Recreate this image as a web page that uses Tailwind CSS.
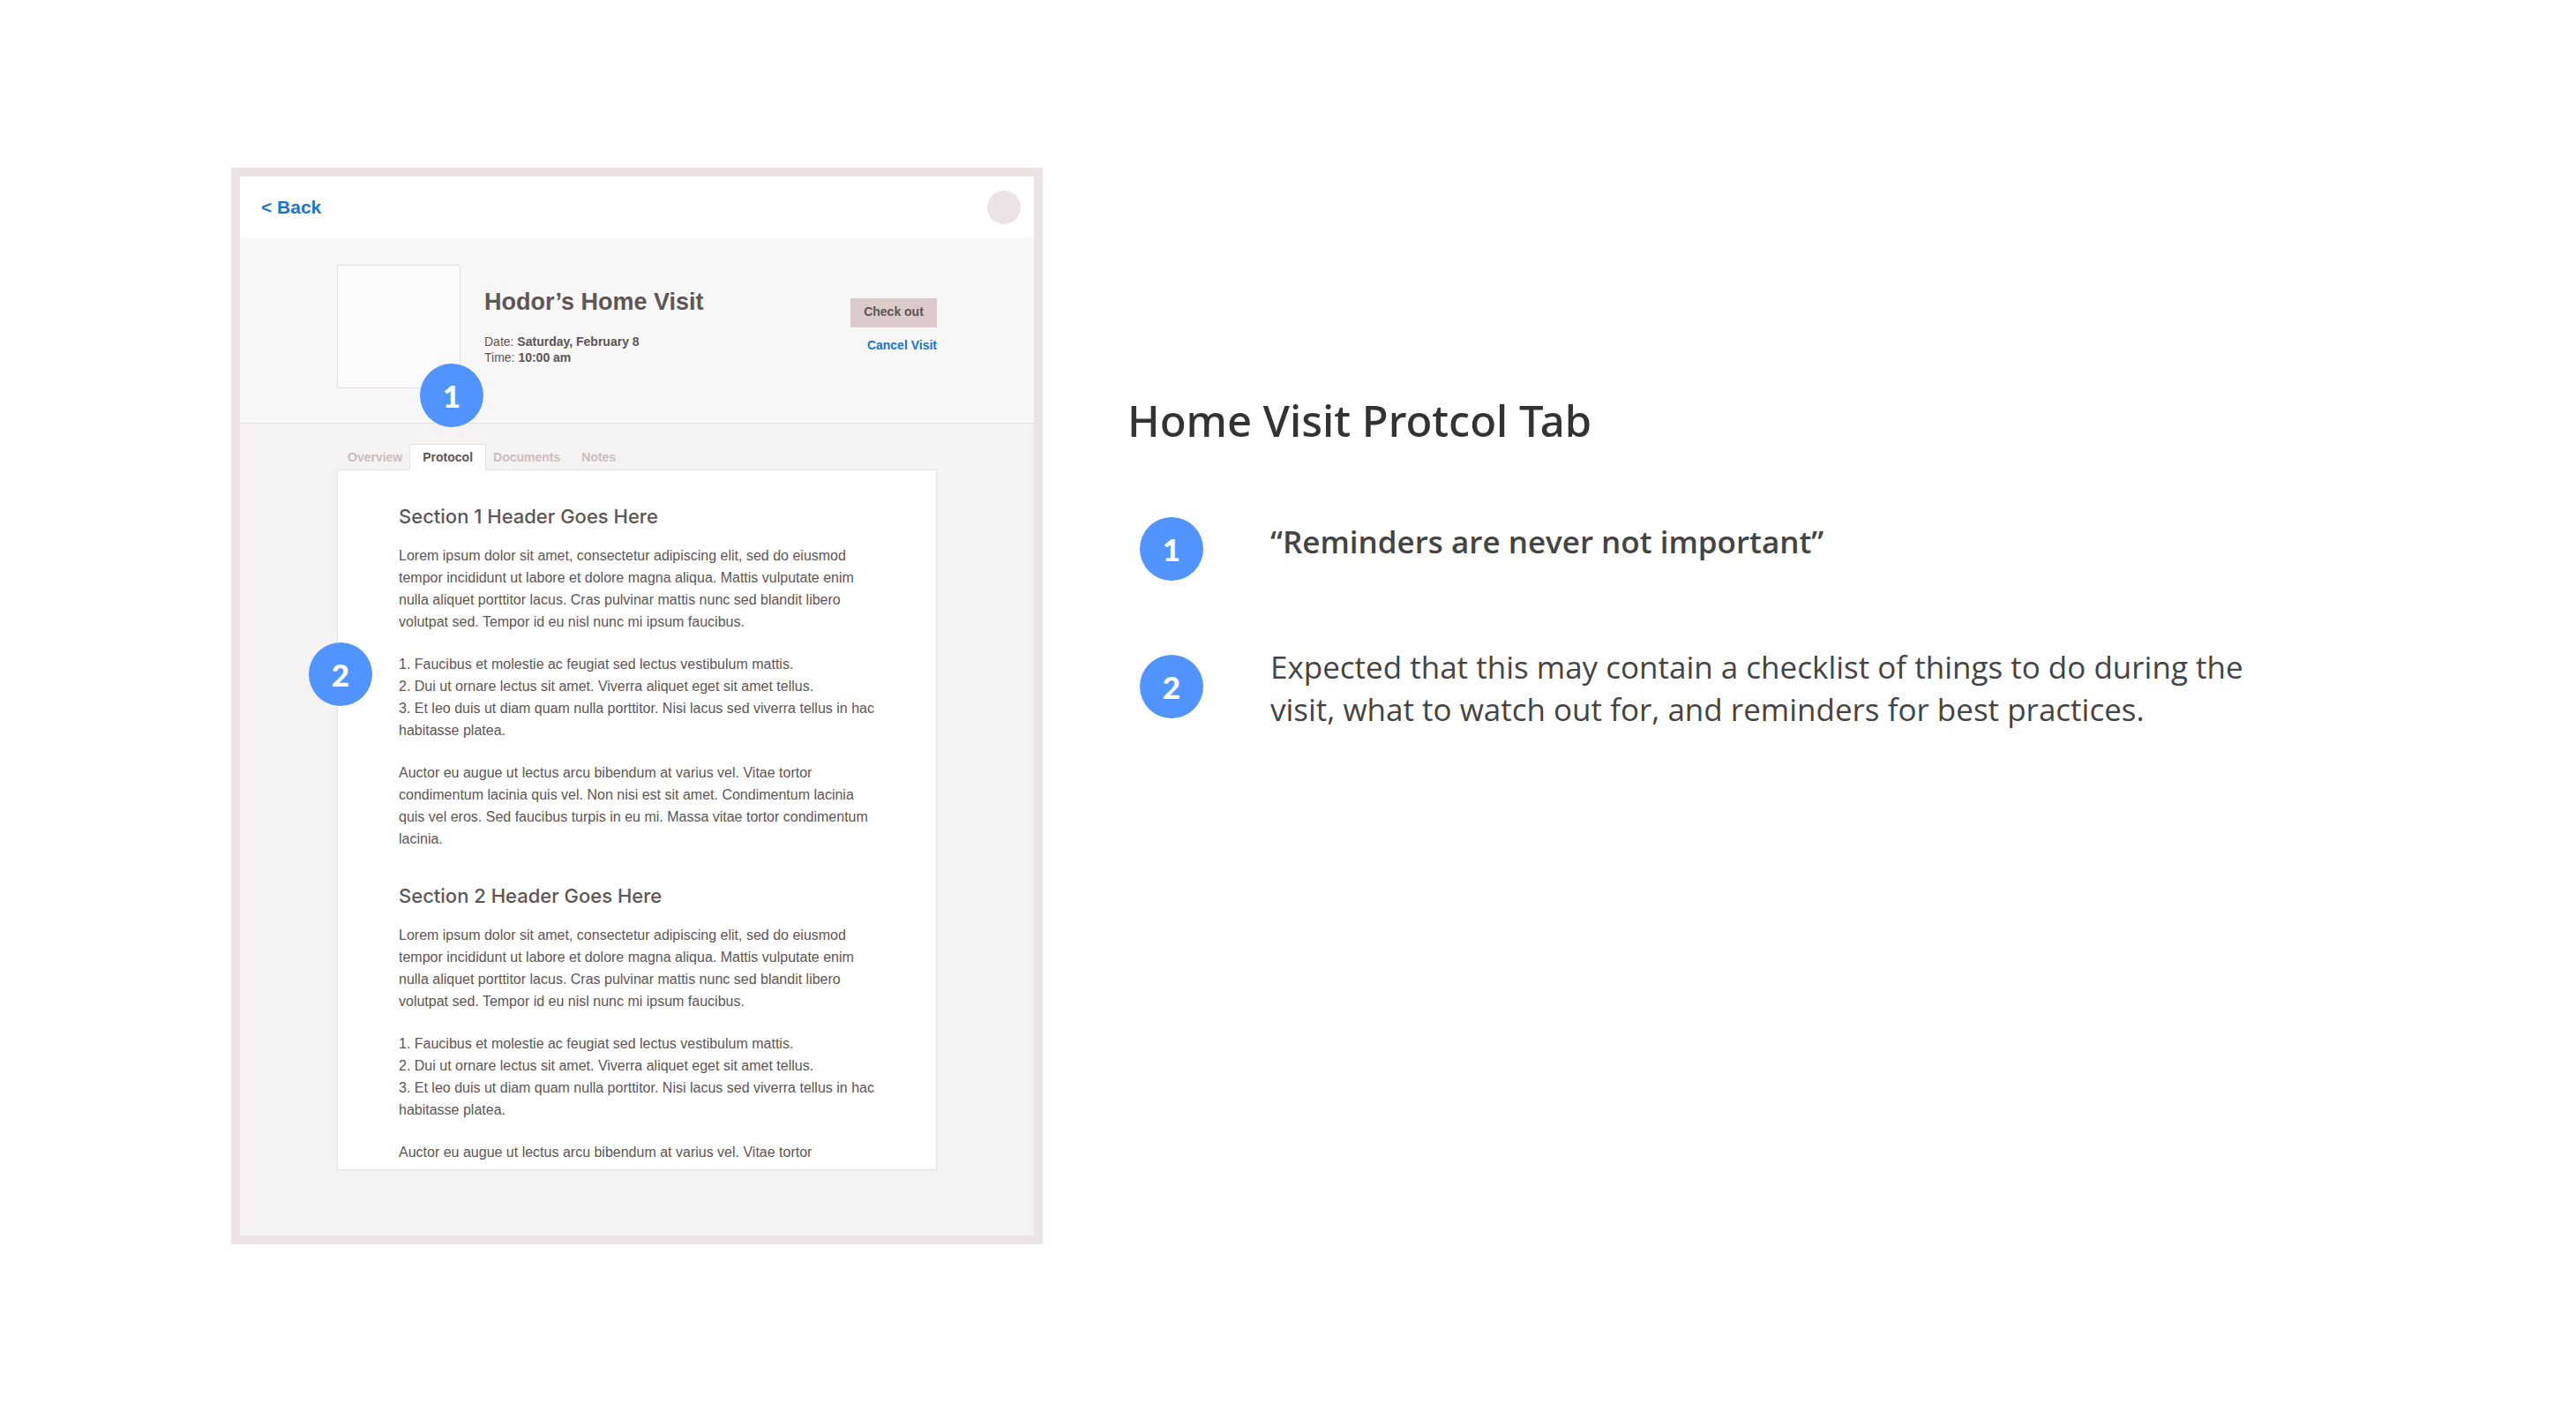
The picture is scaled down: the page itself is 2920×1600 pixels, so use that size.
<!DOCTYPE html>
<html lang="en">
<head>
<meta charset="utf-8">
<meta name="viewport" content="width=device-width, initial-scale=1">
<title>Home Visit Protocol Tab</title>
<script src="https://cdn.jsdelivr.net/npm/@tailwindcss/browser@4"></script>
</head>
<body class="min-h-screen bg-white">
<main class="flex items-start gap-24 pt-[190px] pr-16 pb-16 pl-[262px]">

  <!-- Tablet wireframe -->
  <div class="shrink-0 basis-[920px] border-10 border-[#ebe3e4] bg-[#f4f3f1] font-['Liberation_Sans',Arial,sans-serif] text-[#5e5555]">
    <header class="flex h-[70px] items-center justify-between bg-white pr-[15px] pb-px pl-6">
      <a href="#" class="text-[21px] leading-6 font-bold text-[#1b75d0]">&lt; Back</a>
      <button type="button" aria-label="Account" class="size-[38px] rounded-full bg-[#ebe3e4]"></button>
    </header>

    <section class="flex h-[210px] items-start border-b border-[#dfe0e1] bg-[#f7f7f7] px-[110px] pt-[30px]">
      <div class="relative size-[140px] shrink-0 border border-[#e2e2e3] bg-[#fcfafb]">
        <span class="absolute top-[111px] left-[93px] flex size-[72px] items-center justify-center rounded-full bg-[#5194ff] font-['Lato',sans-serif] text-[35px] leading-none font-black text-white">1</span>
      </div>
      <div class="ml-[27px] flex-1 pt-[26px]">
        <h1 class="text-[27px] leading-8 font-bold">Hodor’s Home Visit</h1>
        <p class="mt-5 text-sm leading-[18px]">Date: <strong>Saturday, February 8</strong><br>Time: <strong>10:00 am</strong></p>
      </div>
      <div class="flex flex-col items-end pt-[38px]">
        <button type="button" class="h-[33px] w-[98px] bg-[#dbcbcb] pb-1 text-sm font-bold">Check out</button>
        <a href="#" class="mt-[11px] text-sm leading-[18px] font-bold text-[#1b75d0]">Cancel Visit</a>
      </div>
    </section>

    <section class="px-[110px] pt-[23px] pb-[74px]">
      <nav class="relative z-10 -mb-px flex h-[30px] items-stretch gap-2 pl-3 text-sm leading-[29px] font-bold text-[#cdbdbd]">
        <a href="#" class="border-t border-transparent">Overview</a>
        <a href="#" aria-current="page" class="border border-b-0 border-[#e2e3e4] bg-white px-[14px] text-[#5e5555]">Protocol</a>
        <a href="#" class="mr-4 border-t border-transparent">Documents</a>
        <a href="#" class="border-t border-transparent">Notes</a>
      </nav>

      <div class="relative border border-[#e2e3e4] bg-white">
        <div class="h-[792px] overflow-hidden pt-9 pr-[68px] pl-[69px] text-base leading-[25px]">
          <article>
            <h2 class="font-['Inter',sans-serif] text-[22px] leading-8 font-medium">Section 1 Header Goes Here</h2>
            <p class="mt-4">Lorem ipsum dolor sit amet, consectetur adipiscing elit, sed do eiusmod tempor incididunt ut labore et dolore magna aliqua. Mattis vulputate enim nulla aliquet porttitor lacus. Cras pulvinar mattis nunc sed blandit libero volutpat sed. Tempor id eu nisl nunc mi ipsum faucibus.</p>
            <ol class="mt-[23px] list-none">
              <li>1. Faucibus et molestie ac feugiat sed lectus vestibulum mattis.</li>
              <li>2. Dui ut ornare lectus sit amet. Viverra aliquet eget sit amet tellus.</li>
              <li>3. Et leo duis ut diam quam nulla porttitor. Nisi lacus sed viverra tellus in hac habitasse platea.</li>
            </ol>
            <p class="mt-[23px]">Auctor eu augue ut lectus arcu bibendum at varius vel. Vitae tortor condimentum lacinia quis vel. Non nisi est sit amet. Condimentum lacinia quis vel eros. Sed faucibus turpis in eu mi. Massa vitae tortor condimentum lacinia.</p>
          </article>
          <article class="mt-9">
            <h2 class="font-['Inter',sans-serif] text-[22px] leading-8 font-medium">Section 2 Header Goes Here</h2>
            <p class="mt-4">Lorem ipsum dolor sit amet, consectetur adipiscing elit, sed do eiusmod tempor incididunt ut labore et dolore magna aliqua. Mattis vulputate enim nulla aliquet porttitor lacus. Cras pulvinar mattis nunc sed blandit libero volutpat sed. Tempor id eu nisl nunc mi ipsum faucibus.</p>
            <ol class="mt-[23px] list-none">
              <li>1. Faucibus et molestie ac feugiat sed lectus vestibulum mattis.</li>
              <li>2. Dui ut ornare lectus sit amet. Viverra aliquet eget sit amet tellus.</li>
              <li>3. Et leo duis ut diam quam nulla porttitor. Nisi lacus sed viverra tellus in hac habitasse platea.</li>
            </ol>
            <p class="mt-[23px]">Auctor eu augue ut lectus arcu bibendum at varius vel. Vitae tortor</p>
          </article>
        </div>
        <span class="absolute top-[195px] -left-[33px] flex size-[72px] items-center justify-center rounded-full bg-[#5194ff] font-['Lato',sans-serif] text-[35px] leading-none font-black text-white">2</span>
      </div>
    </section>
  </div>

  <!-- Annotations -->
  <section class="flex-1 pt-[254px] font-['Open_Sans','Noto_Sans',sans-serif] text-[35px] leading-[48px] text-[#444]">
    <h2 class="font-['Noto_Sans',sans-serif] text-[49px] leading-[64px] font-medium text-[#333]">Home Visit Protcol Tab</h2>
    <ol class="mt-[78px] flex list-none flex-col gap-[74px] pl-[14px]">
      <li class="flex items-start gap-[76px]">
        <span class="flex size-[72px] shrink-0 items-center justify-center rounded-full bg-[#5194ff] font-['Lato',sans-serif] leading-none font-black text-white">1</span>
        <p class="pt-1 font-semibold">“Reminders are never not important”</p>
      </li>
      <li class="flex items-start gap-[76px]">
        <span class="mt-[10px] flex size-[72px] shrink-0 items-center justify-center rounded-full bg-[#5194ff] font-['Lato',sans-serif] leading-none font-black text-white">2</span>
        <p class="max-w-[1130px]">Expected that this may contain a checklist of things to do during the visit, what to watch out for, and reminders for best practices.</p>
      </li>
    </ol>
  </section>
</main>
</body>
</html>
